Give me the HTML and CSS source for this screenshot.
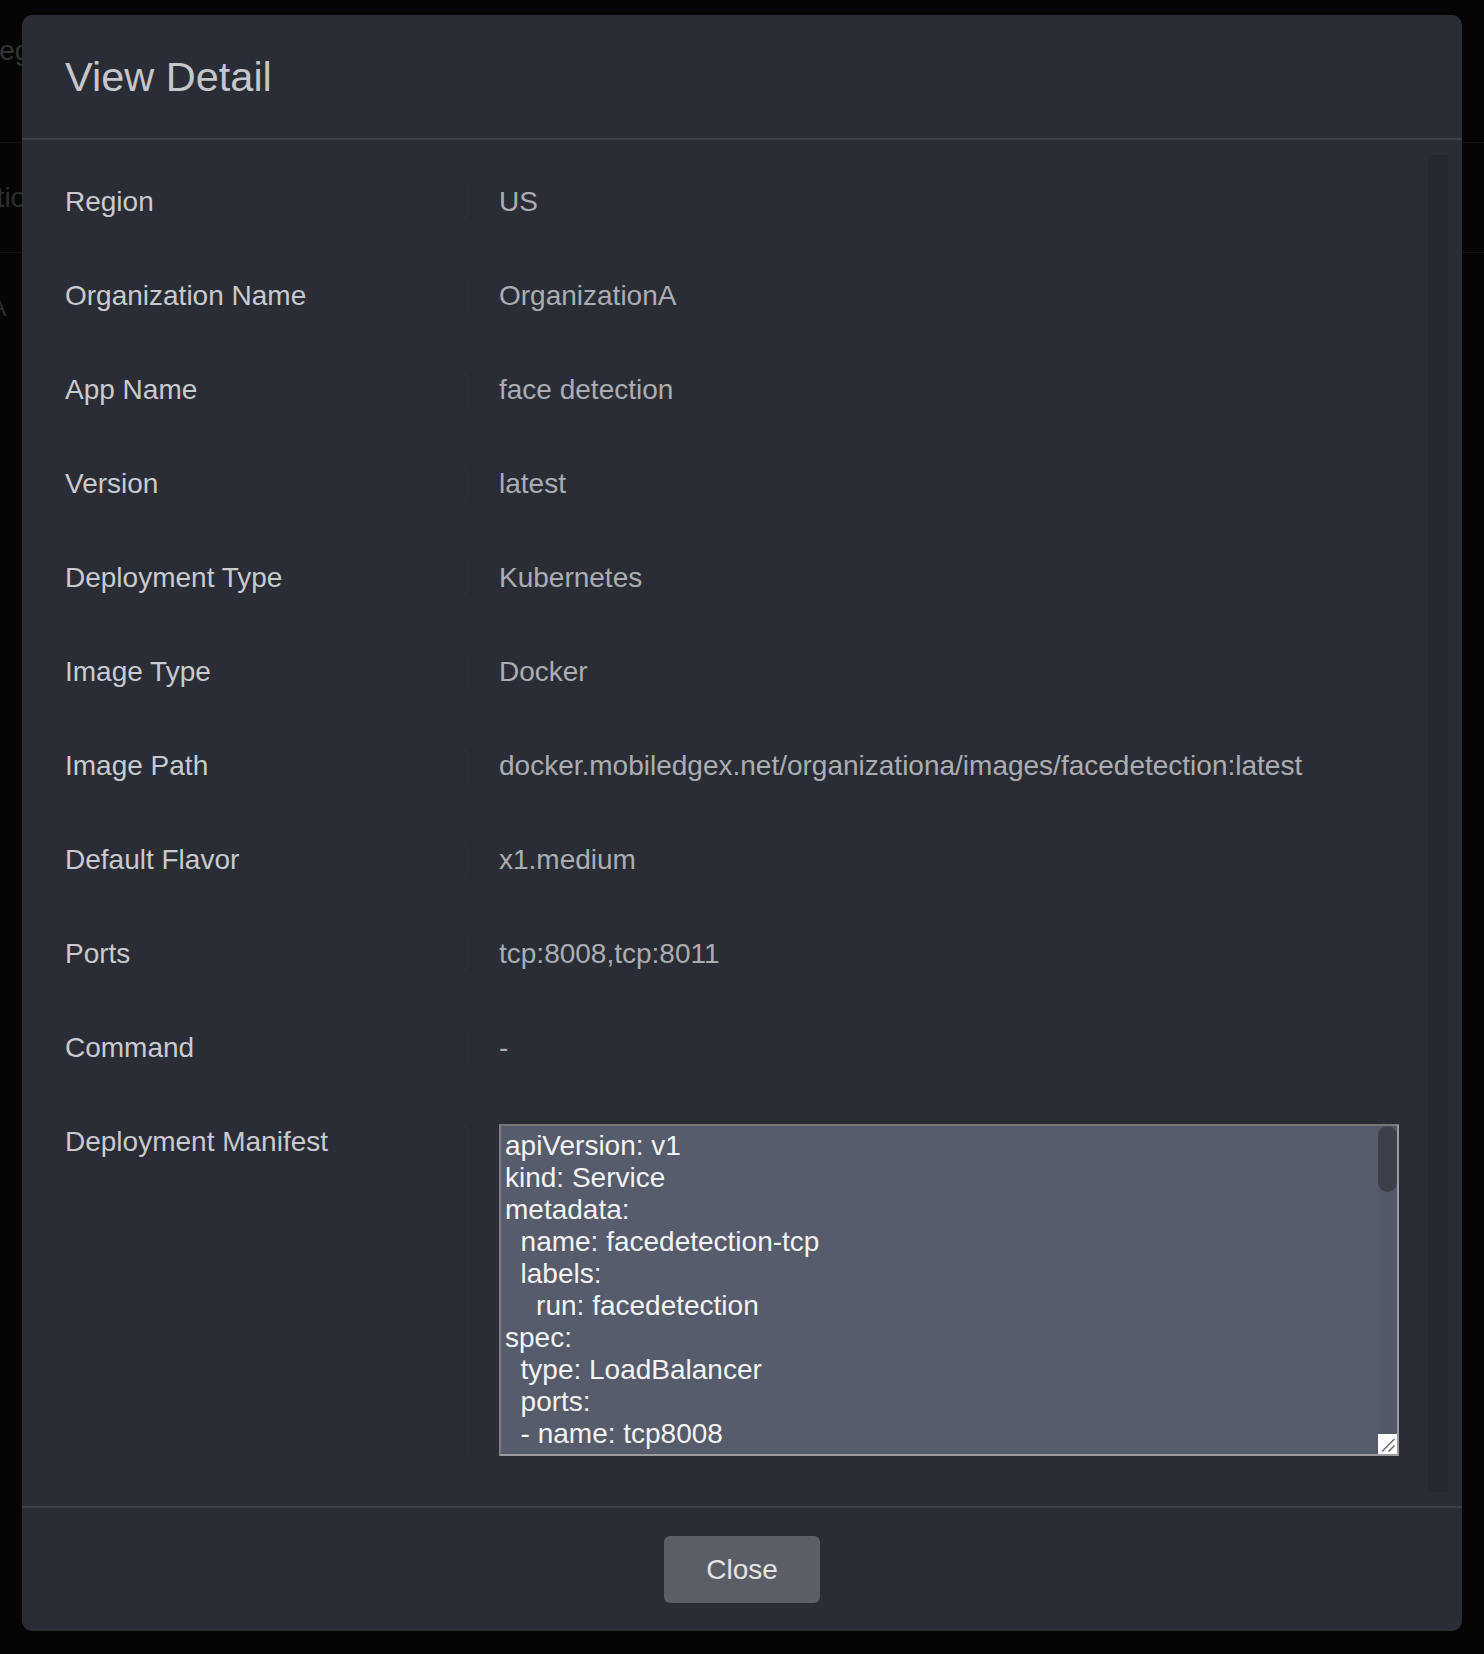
FILE: index.html
```html
<!DOCTYPE html>
<html lang="en">
<head>
<meta charset="utf-8">
<title>View Detail</title>
<link rel="stylesheet" href="styles.css">
</head>
<body>
<div class="page">
  <div class="bg-row bg-row-1"><span class="bg-text bg-text-1">Region</span></div>
  <div class="bg-row bg-row-2"><span class="bg-text bg-text-2">Organization</span></div>
  <div class="bg-row bg-row-3"><span class="bg-text bg-text-3">A</span></div>
</div>

<div class="modal">
  <div class="modal-header">
    <h2 class="modal-title">View Detail</h2>
  </div>
  <div class="modal-body">
    <div class="detail-list">
      <div class="detail-row"><div class="detail-label">Region</div><div class="detail-value">US</div></div>
      <div class="detail-row"><div class="detail-label">Organization Name</div><div class="detail-value">OrganizationA</div></div>
      <div class="detail-row"><div class="detail-label">App Name</div><div class="detail-value">face detection</div></div>
      <div class="detail-row"><div class="detail-label">Version</div><div class="detail-value">latest</div></div>
      <div class="detail-row"><div class="detail-label">Deployment Type</div><div class="detail-value">Kubernetes</div></div>
      <div class="detail-row"><div class="detail-label">Image Type</div><div class="detail-value">Docker</div></div>
      <div class="detail-row"><div class="detail-label">Image Path</div><div class="detail-value">docker.mobiledgex.net/organizationa/images/facedetection:latest</div></div>
      <div class="detail-row"><div class="detail-label">Default Flavor</div><div class="detail-value">x1.medium</div></div>
      <div class="detail-row"><div class="detail-label">Ports</div><div class="detail-value">tcp:8008,tcp:8011</div></div>
      <div class="detail-row"><div class="detail-label">Command</div><div class="detail-value">-</div></div>
      <div class="detail-row"><div class="detail-label">Deployment Manifest</div>
        <div class="detail-value">
          <div class="manifest">
            <div class="manifest-text">apiVersion: v1
kind: Service
metadata:
  name: facedetection-tcp
  labels:
    run: facedetection
spec:
  type: LoadBalancer
  ports:
  - name: tcp8008
    protocol: TCP
    port: 8008
    targetPort: 8008
  - name: tcp8011
    protocol: TCP
    port: 8011
    targetPort: 8011
  selector:
    run: facedetection</div>
            <div class="manifest-bar">
              <div class="manifest-thumb"></div>
              <div class="manifest-spacer"></div>
              <div class="manifest-resizer">
                <svg width="19" height="20" viewBox="0 0 19 20"><path d="M4 17.5 L16.5 5 M10.5 17.5 L16.5 11.5" stroke="#6b6b6b" stroke-width="1.5" fill="none"/></svg>
              </div>
            </div>
          </div>
        </div>
      </div>
    </div>
    <div class="scroll-track"></div>
  </div>
  <div class="modal-footer">
    <button class="btn-close" type="button">Close</button>
  </div>
</div>
</body>
</html>
```
FILE: styles.css
```css
* { box-sizing: border-box; }

html, body {
  margin: 0;
  padding: 0;
  background: #000;
}

body {
  width: 1484px;
  height: 1654px;
  position: relative;
  overflow: hidden;
  font-family: "Liberation Sans", Arial, Helvetica, sans-serif;
}

/* dimmed page behind the modal */
.page {
  height: 1654px;
  background: #050505;
}

.bg-row {
  border-bottom: 1px solid #141414;
  font-size: 28px;
  line-height: 32px;
  color: #343434;
  white-space: nowrap;
  overflow: hidden;
}

.bg-row-1 { height: 143px; padding-top: 35px; }
.bg-row-2 { height: 110px; padding-top: 39px; color: #2e2e2e; }
.bg-row-3 { height: 200px; padding-top: 38px; color: #2a2a2a; border-bottom: none; }

.bg-text { display: inline-block; }
.bg-text-1 { margin-left: -21px; }
.bg-text-2 { margin-left: -117px; }
.bg-text-3 { margin-left: -12px; }

/* modal */
.modal {
  position: absolute;
  left: 22px;
  top: 15px;
  width: 1440px;
  height: 1616px;
  background: #2a2d35;
  border-radius: 10px;
  display: flex;
  flex-direction: column;
  overflow: hidden;
}

.modal-header {
  height: 125px;
  flex: none;
  border-bottom: 2px solid #3b3e45;
  display: flex;
  align-items: center;
  padding-left: 43px;
}

.modal-title {
  margin: 0;
  font-size: 41.5px;
  font-weight: 400;
  line-height: 1.15;
  color: #c4c6c9;
}

.modal-body {
  flex: 1;
  min-height: 0;
  display: flex;
  padding: 15px 14px 14px 43px;
}

.detail-list {
  flex: 1;
  min-width: 0;
  overflow: hidden;
}

.scroll-track {
  width: 20px;
  flex: none;
  background: #25282d;
}

.detail-row {
  display: flex;
  padding: 29px 0;
  font-size: 28px;
  line-height: 36px;
}

.detail-label {
  width: 405px;
  flex: none;
  color: #c8cacd;
}

.detail-value {
  flex: 1;
  min-width: 0;
  border-left: 1px solid #24272d;
  padding: 0 29px 0 28px;
  color: #abadb1;
  white-space: nowrap;
}

/* manifest textarea */
.manifest {
  height: 332px;
  display: flex;
  background: #565c6b;
  border: 2px solid #9b9b9b;
  border-top-color: #767676;
  border-left-color: #7d7d7d;
  white-space: normal;
}

.manifest-text {
  flex: 1;
  min-width: 0;
  padding: 4px;
  overflow: hidden;
  white-space: pre;
  font-size: 28px;
  line-height: 32px;
  color: #f3f3f3;
}

.manifest-bar {
  width: 19px;
  flex: none;
  display: flex;
  flex-direction: column;
  background: #535969;
}

.manifest-thumb {
  height: 66px;
  border-radius: 10px;
  background: #3c404b;
}

.manifest-spacer { flex: 1; }

.manifest-resizer {
  height: 20px;
  background: #fdfdfd;
  display: flex;
}

/* footer */
.modal-footer {
  height: 125px;
  flex: none;
  border-top: 2px solid #3b3e45;
  display: flex;
  align-items: center;
  justify-content: center;
}

.btn-close {
  width: 156px;
  height: 67px;
  border: none;
  border-radius: 6px;
  background: #5b5e67;
  color: #e4e4e4;
  font-family: "Liberation Sans", Arial, Helvetica, sans-serif;
  font-size: 28px;
  padding: 0;
}
```
